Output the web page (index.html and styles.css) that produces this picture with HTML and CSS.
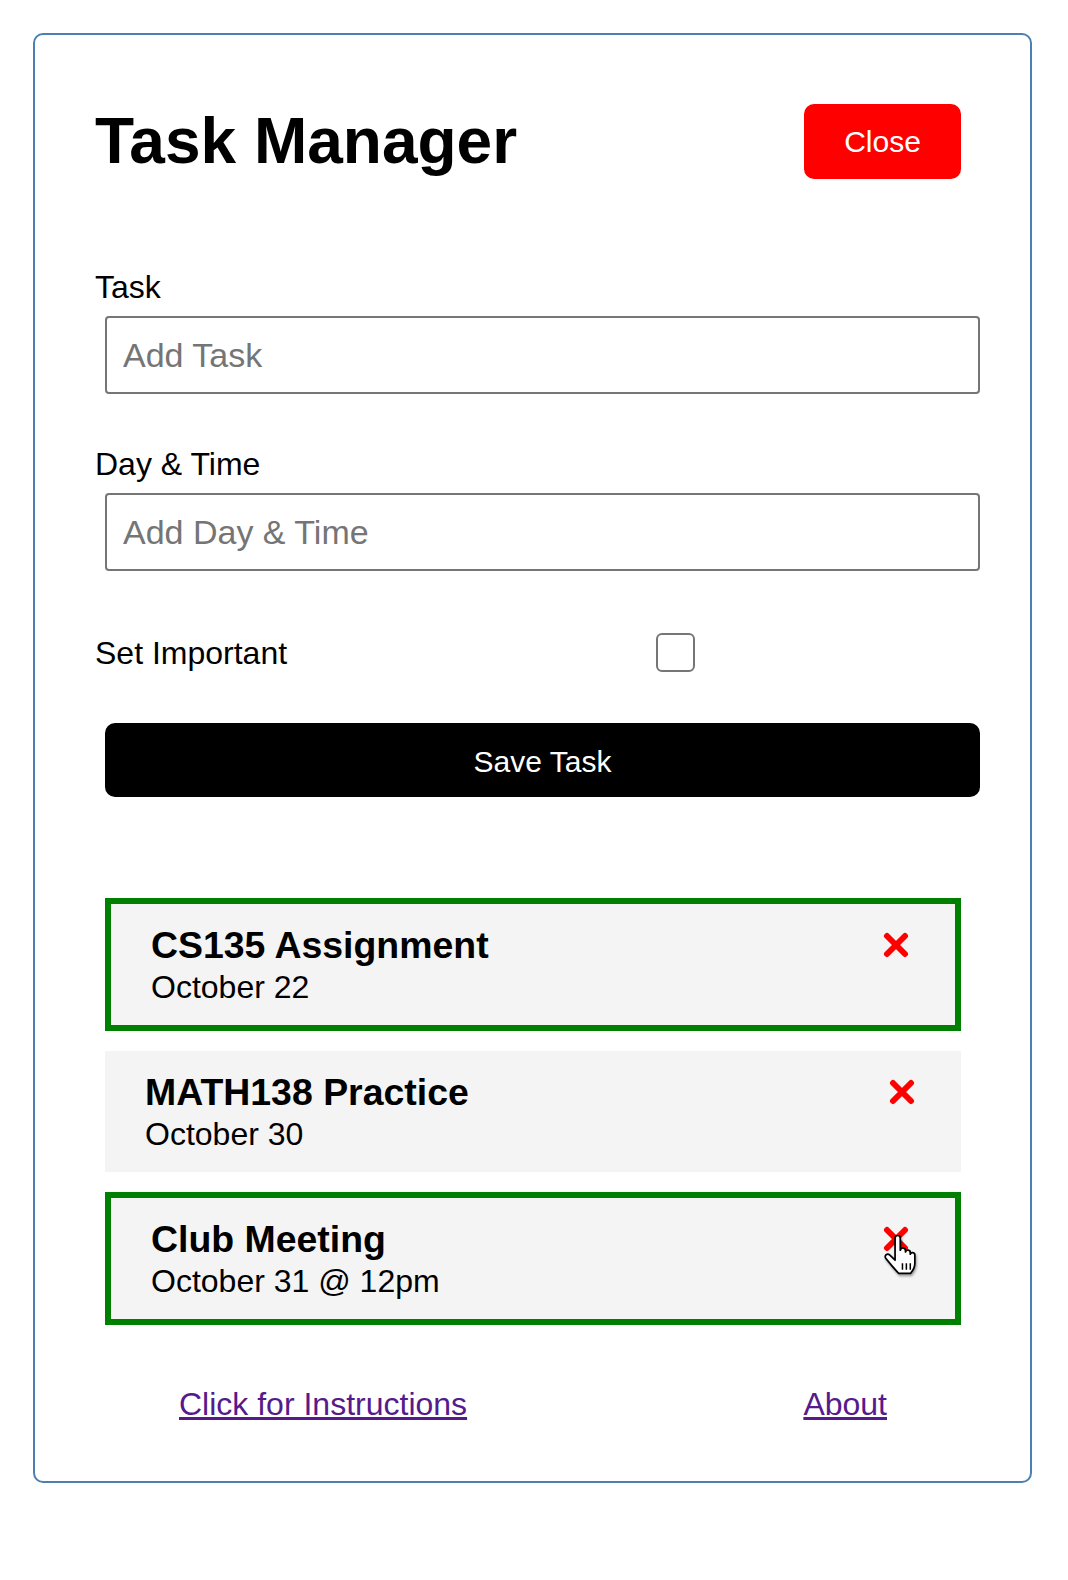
FILE: index.html
```html
<!DOCTYPE html>
<html lang="en">
<head>
    <meta charset="UTF-8">
    <meta name="viewport" content="width=device-width, initial-scale=1.0">
    <title>Task Manager</title>
    <link rel="stylesheet" href="styles.css">
</head>
<body>
    <div class="container">
        <header class="header">
            <h1>Task Manager</h1>
            <button class="btn-close">Close</button>
        </header>

        <form class="add-form">
            <div class="form-control">
                <label for="task">Task</label>
                <input type="text" id="task" placeholder="Add Task">
            </div>
            <div class="form-control">
                <label for="day">Day &amp; Time</label>
                <input type="text" id="day" placeholder="Add Day &amp; Time">
            </div>
            <div class="form-control-check">
                <label for="important">Set Important</label>
                <input type="checkbox" id="important">
            </div>
            <button type="button" class="btn-save">Save Task</button>
        </form>

        <div class="tasks">
            <div class="task important">
                <div class="task-text">
                    <h3>CS135 Assignment</h3>
                    <p>October 22</p>
                </div>
                <span class="task-delete">
                    <svg width="26" height="26" viewBox="0 0 26 26"><path d="M4 4 L22 22 M22 4 L4 22" stroke="#ff0000" stroke-width="6" stroke-linecap="round"/></svg>
                </span>
            </div>
            <div class="task">
                <div class="task-text">
                    <h3>MATH138 Practice</h3>
                    <p>October 30</p>
                </div>
                <span class="task-delete">
                    <svg width="26" height="26" viewBox="0 0 26 26"><path d="M4 4 L22 22 M22 4 L4 22" stroke="#ff0000" stroke-width="6" stroke-linecap="round"/></svg>
                </span>
            </div>
            <div class="task important">
                <div class="task-text">
                    <h3>Club Meeting</h3>
                    <p>October 31 @ 12pm</p>
                </div>
                <span class="task-delete">
                    <svg width="26" height="26" viewBox="0 0 26 26"><path d="M4 4 L22 22 M22 4 L4 22" stroke="#ff0000" stroke-width="6" stroke-linecap="round"/></svg>
                    <!-- mouse pointer hovering the delete icon -->
                    <svg class="pointer" width="37" height="40" viewBox="0 0 17 18.4">
                        <path d="M6 1.5 C6 0.7 6.6 0.2 7.2 0.2 C7.9 0.2 8.4 0.7 8.4 1.5 L8.4 7 C8.6 6.3 9.2 5.9 9.8 6 C10.4 6.1 10.8 6.6 10.8 7.2 L10.8 7.8 C11 7.2 11.5 6.9 12.1 7 C12.7 7.1 13 7.6 13 8.2 L13 8.8 C13.2 8.3 13.7 8 14.2 8.1 C14.8 8.2 15.1 8.7 15.1 9.3 L15.1 13 C15.1 15 14.2 16.4 13.2 17.6 L7.6 17.6 C6.6 16.5 5.3 15 4.1 13.6 L1.8 10.8 C1.3 10.2 1.4 9.5 1.9 9.1 C2.4 8.7 3.1 8.8 3.6 9.3 L6 11.6 Z" fill="#ffffff" stroke="#000000" stroke-width="0.8" stroke-linejoin="round"/>
                        <path d="M9.4 13 V16 M11.2 13 V16 M13 13 V16" stroke="#000000" stroke-width="0.7"/>
                    </svg>
                </span>
            </div>
        </div>

        <footer class="footer">
            <a href="#">Click for Instructions</a>
            <a href="#">About</a>
        </footer>
    </div>
</body>
</html>
```

FILE: styles.css
```css
body {
    margin: 0;
    background: #ffffff;
    font-family: 'Liberation Sans', Arial, Helvetica, sans-serif;
    color: #000000;
}
.container {
    width: 999px;
    box-sizing: border-box;
    margin: 33px 0 0 33px;
    padding: 66px 50px 58px 60px;
    border: 2px solid #4c80b0;
    border-radius: 10px;
}
.header {
    display: flex;
    justify-content: space-between;
    align-items: flex-start;
    padding-right: 19px;
}
h1 {
    margin: 3px 0 0;
    font-size: 64px;
    font-weight: 700;
    line-height: 74px;
}
.btn-close {
    margin-top: 3px;
    width: 157px;
    height: 75px;
    background: #ff0000;
    color: #ffffff;
    border: none;
    border-radius: 10px;
    font-family: inherit;
    font-size: 30px;
    cursor: pointer;
}
.add-form {
    margin-top: 90px;
}
.form-control {
    margin-bottom: 52px;
}
.form-control label {
    display: block;
    font-size: 32px;
    line-height: 36px;
    margin-bottom: 11px;
}
.form-control input {
    display: block;
    margin-left: 10px;
    width: 875px;
    height: 78px;
    box-sizing: border-box;
    padding: 0 16px;
    border: 2px solid #767676;
    border-radius: 4px;
    font-family: inherit;
    font-size: 34px;
}
.form-control input::placeholder {
    color: #757575;
}
.form-control-check {
    display: flex;
    align-items: center;
    margin-top: 62px;
}
.form-control-check label {
    width: 561px;
    font-size: 32px;
    line-height: 36px;
}
.form-control-check input {
    appearance: none;
    margin: 0;
    width: 39px;
    height: 39px;
    border: 2px solid #767676;
    border-radius: 6px;
    background: #ffffff;
}
.btn-save {
    display: block;
    margin: 51px 0 0 10px;
    padding-top: 4px;
    width: 875px;
    height: 74px;
    background: #000000;
    color: #ffffff;
    border: none;
    border-radius: 10px;
    font-family: inherit;
    font-size: 30px;
    cursor: pointer;
}
.tasks {
    display: flex;
    flex-direction: column;
    gap: 20px;
    margin: 101px 0 0 10px;
    width: 856px;
}
.task {
    display: flex;
    justify-content: space-between;
    align-items: flex-start;
    padding: 19px 40px 19px;
    background: #f4f4f4;
}
.task.important {
    border: 6px solid #008000;
}
.task h3 {
    margin: 0;
    font-size: 37.44px;
    line-height: 44px;
}
.task p {
    margin: 2px 0 0;
    font-size: 32px;
    line-height: 37px;
}
.task-delete {
    position: relative;
    display: flex;
    align-items: center;
    height: 44px;
    margin-right: 6px;
    cursor: pointer;
}
.pointer {
    position: absolute;
    left: -1px;
    top: 18px;
    filter: drop-shadow(1px 2px 1px rgba(0, 0, 0, 0.35));
}
.footer {
    display: flex;
    justify-content: space-between;
    margin-top: 61px;
    padding: 0 93px 0 84px;
    font-size: 32px;
    line-height: 37px;
}
.footer a {
    color: #551a8b;
}
```
